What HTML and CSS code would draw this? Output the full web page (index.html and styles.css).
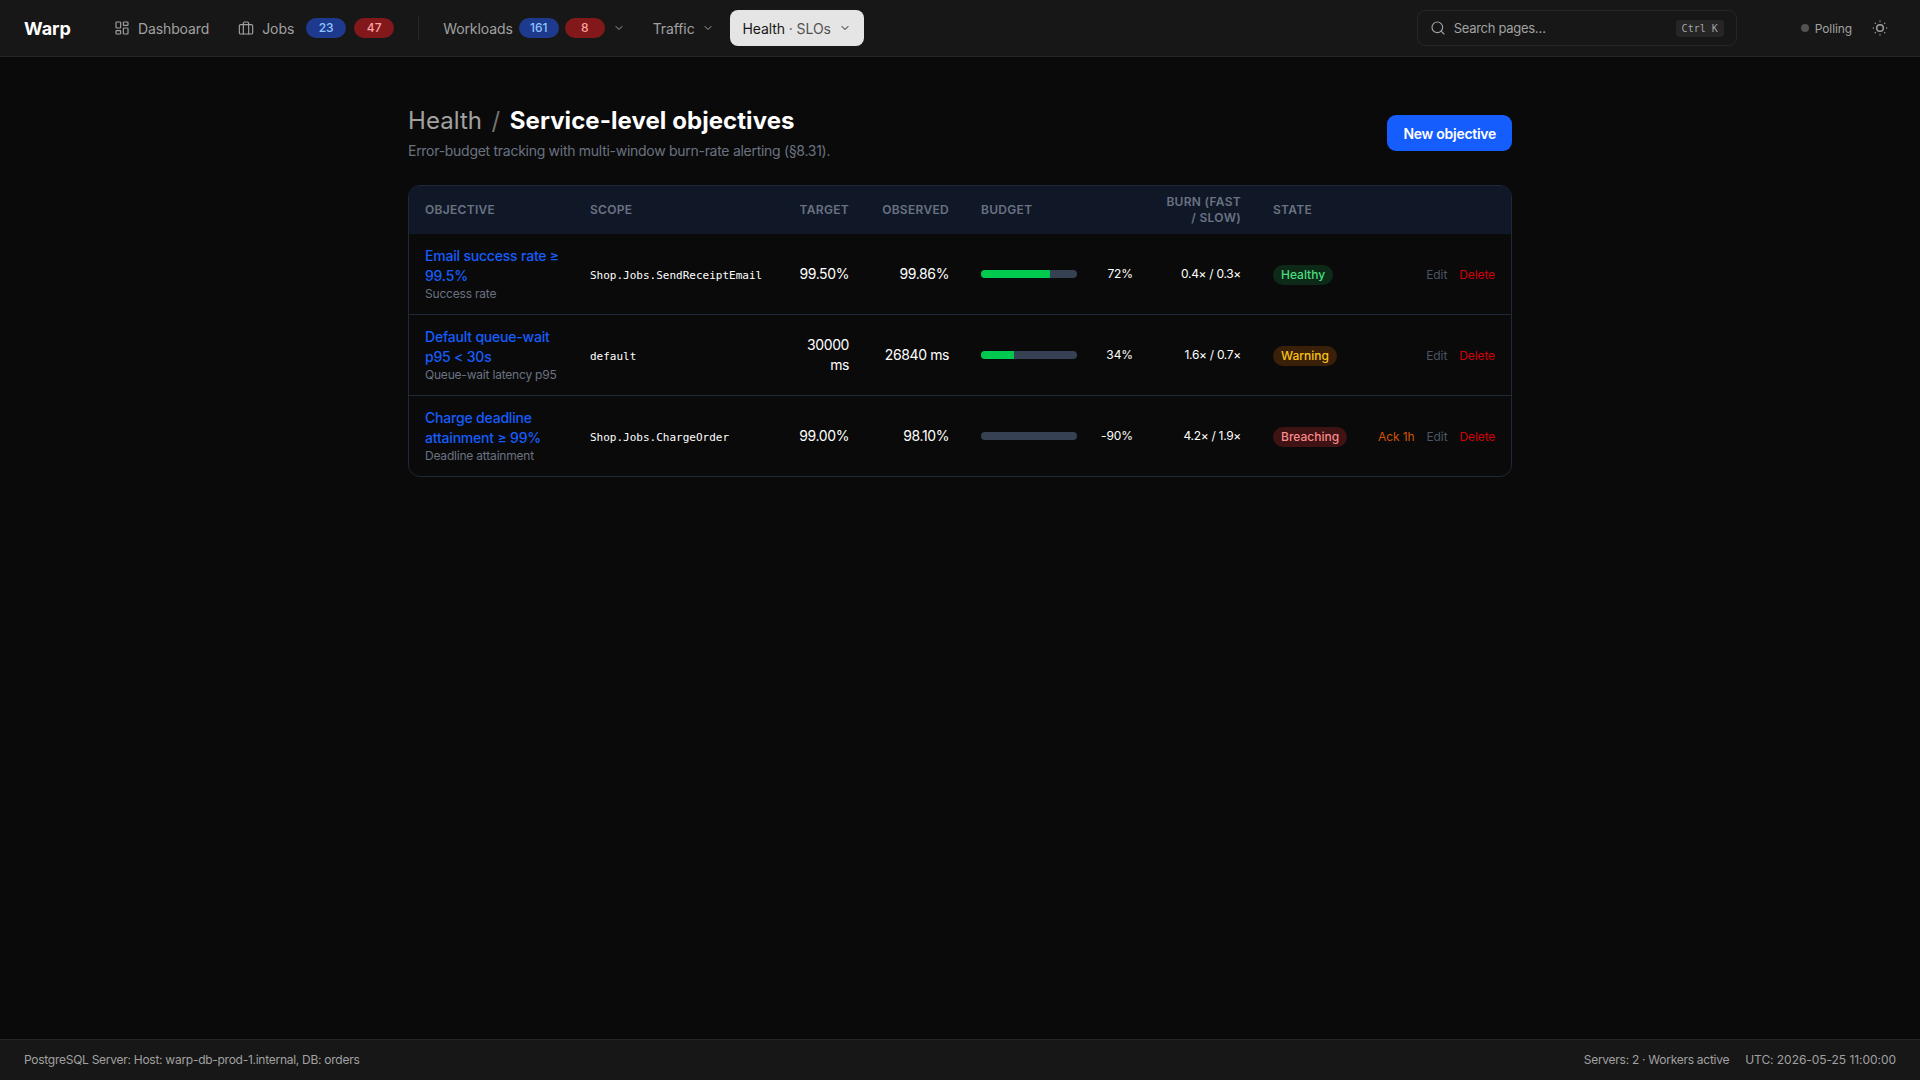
FILE: index.html
```html
<!DOCTYPE html>
<html lang="en">
<head>
  <meta charset="UTF-8">
  <title>Warp - Service-level objectives</title>
  <link rel="stylesheet" href="styles.css">
</head>
<body>

  <!-- Top bar -->
  <header class="topbar">
    <a class="logo">Warp</a>
    <nav class="menu">
      <a class="menu-item">
        <svg class="icon" viewBox="0 0 24 24"><rect x="3" y="3" width="7" height="9" rx="1"/><rect x="14" y="3" width="7" height="5" rx="1"/><rect x="14" y="12" width="7" height="9" rx="1"/><rect x="3" y="16" width="7" height="5" rx="1"/></svg>
        Dashboard
      </a>
      <a class="menu-item">
        <svg class="icon" viewBox="0 0 24 24"><rect x="2" y="7" width="20" height="14" rx="2"/><path d="M16 21V5a2 2 0 0 0-2-2h-4a2 2 0 0 0-2 2v16"/></svg>
        <span class="jobs-label">Jobs</span>
        <span class="count count-blue">23</span>
        <span class="count count-red">47</span>
      </a>
      <span class="divider"></span>
      <a class="menu-item workloads">
        Workloads
        <span class="count count-blue">161</span>
        <span class="count count-red">8</span>
        <svg class="chevron" viewBox="0 0 24 24"><path d="m6 9 6 6 6-6"/></svg>
      </a>
      <a class="menu-item traffic">
        Traffic
        <svg class="chevron" viewBox="0 0 24 24"><path d="m6 9 6 6 6-6"/></svg>
      </a>
      <a class="menu-item active">
        <span>Health <span class="sub-page">· SLOs</span></span>
        <svg class="chevron" viewBox="0 0 24 24"><path d="m6 9 6 6 6-6"/></svg>
      </a>
    </nav>

    <div class="search">
      <svg class="icon" viewBox="0 0 24 24"><circle cx="11" cy="11" r="8"/><path d="m21 21-4.3-4.3"/></svg>
      <span class="search-text">Search pages…</span>
      <kbd>Ctrl K</kbd>
    </div>
    <div class="status"><span class="dot"></span>Polling</div>
    <svg class="sun" viewBox="0 0 24 24"><circle cx="12" cy="12" r="4"/><path d="M12 4h.01"/><path d="M20 12h.01"/><path d="M12 20h.01"/><path d="M4 12h.01"/><path d="M17.66 6.34h.01"/><path d="M17.66 17.66h.01"/><path d="M6.34 17.66h.01"/><path d="M6.34 6.34h.01"/></svg>
  </header>

  <main class="page">
    <div class="page-head">
      <div>
        <h1><span class="crumb">Health</span><span class="slash">/</span>Service-level objectives</h1>
        <p class="lead">Error-budget tracking with multi-window burn-rate alerting (§8.31).</p>
      </div>
      <button class="btn-primary">New objective</button>
    </div>

    <div class="card">
      <table class="slo-table">
        <colgroup>
          <col class="col-name"><col class="col-scope"><col class="col-target"><col class="col-observed">
          <col class="col-budget"><col class="col-burn"><col class="col-state"><col class="col-actions">
        </colgroup>
        <thead>
          <tr>
            <th>Objective</th>
            <th>Scope</th>
            <th class="right">Target</th>
            <th class="right">Observed</th>
            <th>Budget</th>
            <th class="right">Burn (fast<br>/ slow)</th>
            <th>State</th>
            <th></th>
          </tr>
        </thead>
        <tbody>
          <tr>
            <td><a class="slo-name">Email success rate ≥ 99.5%</a><div class="slo-kind">Success rate</div></td>
            <td class="scope"><code>Shop.Jobs.SendReceiptEmail</code></td>
            <td class="right num">99.50%</td>
            <td class="right num">99.86%</td>
            <td><div class="budget"><div class="bar"><div class="bar-fill" style="width: 72%"></div></div><span class="pct">72%</span></div></td>
            <td class="right burn">0.4× / 0.3×</td>
            <td><span class="pill pill-ok">Healthy</span></td>
            <td class="actions"><a class="edit">Edit</a><a class="delete">Delete</a></td>
          </tr>
          <tr>
            <td><a class="slo-name">Default queue-wait p95 &lt; 30s</a><div class="slo-kind">Queue-wait latency p95</div></td>
            <td class="scope"><code>default</code></td>
            <td class="right num">30000 ms</td>
            <td class="right num">26840 ms</td>
            <td><div class="budget"><div class="bar"><div class="bar-fill" style="width: 34%"></div></div><span class="pct">34%</span></div></td>
            <td class="right burn">1.6× / 0.7×</td>
            <td><span class="pill pill-warn">Warning</span></td>
            <td class="actions"><a class="edit">Edit</a><a class="delete">Delete</a></td>
          </tr>
          <tr>
            <td><a class="slo-name">Charge deadline attainment ≥ 99%</a><div class="slo-kind">Deadline attainment</div></td>
            <td class="scope"><code>Shop.Jobs.ChargeOrder</code></td>
            <td class="right num">99.00%</td>
            <td class="right num">98.10%</td>
            <td><div class="budget"><div class="bar"><div class="bar-fill" style="width: 0%"></div></div><span class="pct">-90%</span></div></td>
            <td class="right burn">4.2× / 1.9×</td>
            <td><span class="pill pill-bad">Breaching</span></td>
            <td class="actions"><a class="ack">Ack 1h</a><a class="edit">Edit</a><a class="delete">Delete</a></td>
          </tr>
        </tbody>
      </table>
    </div>
  </main>

  <footer class="footer">
    <span class="footer-host">PostgreSQL Server: Host: warp-db-prod-1.internal, DB: orders</span>
    <span class="footer-right"><span class="footer-host">Servers: 2 · Workers active</span><span class="footer-time">UTC: 2026-05-25 11:00:00</span></span>
  </footer>

</body>
</html>
```

FILE: styles.css
```css
* {
  box-sizing: border-box;
}

body {
  margin: 0;
  min-height: 1080px;
  display: flex;
  flex-direction: column;
  background-color: #0a0a0a;
  color: #fff;
  font-family: Inter, "Liberation Sans", sans-serif;
  font-size: 14px;
}

svg {
  fill: none;
  stroke: currentColor;
  stroke-width: 2;
  stroke-linecap: round;
  stroke-linejoin: round;
  flex-shrink: 0;
}

.icon {
  width: 16px;
  height: 16px;
  stroke-width: 1.75;
}

.chevron {
  width: 12px;
  height: 12px;
}

/* top bar */
.topbar {
  height: 57px;
  display: flex;
  align-items: center;
  padding: 0 24px;
  background-color: #171717;
  border-bottom: 1px solid #262626;
}

.logo {
  font-size: 18px;
  font-weight: 700;
  margin-right: 31px;
}

.menu {
  display: flex;
  align-items: center;
  gap: 5px;
  flex: 1;
}

.menu-item {
  height: 36px;
  display: flex;
  align-items: center;
  gap: 8px;
  padding: 0 12px;
  border-radius: 8px;
  color: #a1a1a1;
  letter-spacing: -0.1px;
}

.jobs-label {
  margin-right: 4px;
}

.workloads {
  gap: 6px;
  padding-right: 11px;
}

.workloads .chevron {
  margin-left: 2px;
}

.traffic {
  gap: 7px;
  padding-right: 11px;
}

.menu-item.active {
  padding: 0 13px;
  background-color: #e5e5e5;
  color: #171717;
}

.sub-page {
  color: #525252;
}

.divider {
  width: 1px;
  height: 24px;
  margin: 0 7px;
  background-color: #262626;
}

.count {
  min-width: 40px;
  height: 20px;
  padding: 0 10px;
  border-radius: 10px;
  font-size: 12px;
  font-weight: 500;
  line-height: 20px;
  letter-spacing: 0;
  text-align: center;
}

.count-blue {
  background-color: #1e3a8f;
  color: #8ec5ff;
}

.count-red {
  background-color: #82181a;
  color: #ffa2a2;
}

.search {
  width: 320px;
  height: 36px;
  display: flex;
  align-items: center;
  gap: 8px;
  padding: 0 12px;
  border: 1px solid #262626;
  border-radius: 8px;
  color: #a1a1a1;
  font-size: 13px;
  letter-spacing: -0.3px;
}

.search-text {
  flex: 1;
}

kbd {
  padding: 3px 6px;
  border-radius: 4px;
  background-color: #262626;
  color: #a1a1a1;
  font-family: "DejaVu Sans Mono", monospace;
  font-size: 10px;
  letter-spacing: 0;
}

.status {
  display: flex;
  align-items: center;
  gap: 6px;
  margin-left: 64px;
  color: #a1a1a1;
  font-size: 12px;
  letter-spacing: -0.1px;
}

.dot {
  width: 8px;
  height: 8px;
  border-radius: 50%;
  background-color: #525252;
}

.sun {
  width: 20px;
  height: 20px;
  margin-left: 18px;
  margin-right: 6px;
  color: #a1a1a1;
  stroke-width: 1.75;
}

/* page */
.page {
  width: 1104px;
  margin: 0 auto;
  padding-top: 48px;
  flex: 1;
}

.page-head {
  display: flex;
  justify-content: space-between;
  align-items: center;
  margin-bottom: 24px;
}

h1 {
  margin: 0;
  font-size: 24px;
  line-height: 32px;
  font-weight: 700;
  letter-spacing: 0.06px;
}

.crumb {
  color: #a1a1a1;
  font-weight: 400;
}

.slash {
  margin: 0 9.5px;
  color: #737373;
  font-weight: 400;
}

.lead {
  margin: 4px 0 0;
  color: #6a7282;
  font-size: 14px;
  line-height: 20px;
  letter-spacing: -0.28px;
}

.btn-primary {
  height: 36px;
  padding: 0 16px;
  background-color: #155dfc;
  color: #fff;
  border: none;
  border-radius: 9px;
  font-family: inherit;
  font-size: 14px;
  font-weight: 600;
  letter-spacing: -0.28px;
}

/* table */
.card {
  border: 1px solid #1e2939;
  border-radius: 12px;
  overflow: hidden;
}

.slo-table {
  width: 100%;
  table-layout: fixed;
  border-collapse: collapse;
}

.col-name { width: 165px; }
.col-scope { width: 204px; }
.col-target { width: 87px; }
.col-observed { width: 100px; }
.col-budget { width: 184px; }
.col-burn { width: 108px; }
.col-state { width: 105px; }

th {
  padding: 8px 16px;
  background-color: #101828;
  color: #6a7282;
  font-size: 12px;
  line-height: 16px;
  font-weight: 600;
  letter-spacing: 0.3px;
  text-align: left;
  text-transform: uppercase;
  white-space: nowrap;
}

td {
  height: 81px;
  padding: 12px 16px;
  border-top: 1px solid #1e2939;
  font-size: 14px;
  line-height: 20px;
  vertical-align: middle;
}

tbody tr:first-child td,
tbody tr:last-child td {
  height: 80px;
}

tbody tr:first-child td {
  border-top: none;
}

th.right, td.right {
  text-align: right;
}

.slo-name {
  display: block;
  margin-right: -5px;
  color: #155dfc;
  font-weight: 500;
  letter-spacing: -0.2px;
}

.slo-kind {
  color: #6a7282;
  font-size: 12px;
  line-height: 16px;
  letter-spacing: -0.2px;
}

.scope {
  padding-top: 13px;
  padding-bottom: 11px;
}

code {
  font-family: "DejaVu Sans Mono", monospace;
  font-size: 11px;
}

.num {
  letter-spacing: -0.4px;
}

.budget {
  display: flex;
  align-items: center;
  gap: 8px;
}

.bar {
  flex: none;
  width: 96px;
  height: 8px;
  border-radius: 4px;
  background-color: #364153;
  overflow: hidden;
}

.bar-fill {
  height: 100%;
  background-color: #00c950;
}

.pct {
  flex: 1;
  text-align: right;
  font-size: 12px;
  letter-spacing: -0.1px;
}

.burn {
  font-size: 12px;
  letter-spacing: -0.3px;
}

.pill {
  display: inline-block;
  height: 20px;
  padding: 0 8px;
  border-radius: 10px;
  font-size: 12px;
  line-height: 20px;
  font-weight: 500;
}

.pill-ok {
  background-color: #0c2a17;
  color: #4ade80;
}

.pill-warn {
  background-color: #3b2009;
  color: #fac415;
}

.pill-bad {
  background-color: #3f1213;
  color: #f88b8b;
}

.actions {
  padding-top: 13px;
  padding-bottom: 11px;
  text-align: right;
  font-size: 12px;
  letter-spacing: -0.1px;
  white-space: nowrap;
}

.actions a + a {
  margin-left: 12px;
}

.edit {
  color: #4a5565;
}

.delete {
  color: #d0000a;
}

.ack {
  color: #d15400;
}

/* footer */
.footer {
  height: 41px;
  display: flex;
  justify-content: space-between;
  align-items: center;
  padding: 0 24px 1px;
  background-color: #171717;
  border-top: 1px solid #262626;
  color: #a1a1a1;
  font-size: 12px;
}

.footer-host {
  letter-spacing: -0.27px;
}

.footer-time {
  letter-spacing: -0.05px;
}

.footer-right {
  display: flex;
  gap: 16px;
}
```
